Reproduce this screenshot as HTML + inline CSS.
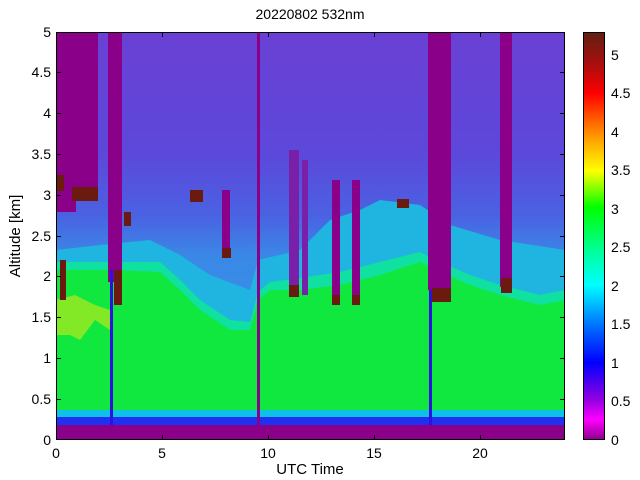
<!DOCTYPE html>
<html><head><meta charset="utf-8"><style>
html,body{margin:0;padding:0;background:#fff;width:640px;height:480px;overflow:hidden}
svg{display:block;font-family:"Liberation Sans",sans-serif}
</style></head><body>
<svg width="640" height="480" viewBox="0 0 640 480">
<defs>
<linearGradient id="sky" x1="0" y1="0" x2="0" y2="1">
<stop offset="0" stop-color="#6a40d4"/>
<stop offset="0.3" stop-color="#5c48da"/>
<stop offset="0.45" stop-color="#4a62e2"/>
<stop offset="0.55" stop-color="#3a88e6"/>
<stop offset="1" stop-color="#30a0e8"/>
</linearGradient>
<linearGradient id="cb" x1="0" y1="1" x2="0" y2="0">
<stop offset="0" stop-color="#8b008b"/>
<stop offset="0.05" stop-color="#ff00ff"/>
<stop offset="0.1" stop-color="#9000e0"/>
<stop offset="0.19" stop-color="#0000ff"/>
<stop offset="0.28" stop-color="#0070ff"/>
<stop offset="0.38" stop-color="#00ffff"/>
<stop offset="0.47" stop-color="#00ff90"/>
<stop offset="0.57" stop-color="#00ff00"/>
<stop offset="0.66" stop-color="#ffff00"/>
<stop offset="0.75" stop-color="#ff9000"/>
<stop offset="0.85" stop-color="#ff0000"/>
<stop offset="0.93" stop-color="#a01010"/>
<stop offset="1" stop-color="#602010"/>
</linearGradient>
<clipPath id="c"><rect x="56" y="32" width="509" height="408"/></clipPath>
</defs>
<g clip-path="url(#c)">
<rect x="56" y="32" width="509" height="408" fill="url(#sky)"/>
<polygon fill="#20b4e0" points="56,250 100,245 150,240 180,255 210,275 250,290 258,260 300,250 330,220 360,210 380,200 420,205 450,225 500,240 565,250 565,415 56,415"/>
<polygon fill="#10e0a0" points="56,262 110,262 160,262 180,280 200,300 230,320 250,322 258,292 270,282 300,278 340,272 380,262 420,252 440,262 470,275 500,285 540,295 565,290 565,415 56,415"/>
<polygon fill="#10e840" points="56,270 110,270 160,272 180,290 200,310 230,330 250,330 258,300 270,290 300,290 340,285 380,275 420,262 440,272 470,285 500,295 540,305 565,300 565,415 56,415"/>
<polygon fill="#a0e820" opacity="0.8" points="56,300 75,295 95,305 110,310 110,330 95,320 80,340 70,335 56,335"/>
<rect x="56" y="410" width="509" height="7" fill="#10c0e8"/>
<rect x="56" y="417" width="509" height="8" fill="#2030f0"/>
<rect x="56" y="425" width="509" height="15" fill="#8a0088"/>
<rect x="56" y="32" width="42" height="155" fill="#8a0088"/>
<rect x="56" y="32" width="20" height="180" fill="#8a0088"/>
<rect x="108" y="32" width="14" height="250" fill="#8a0088"/>
<rect x="110" y="270" width="3" height="155" fill="#3010e0"/>
<rect x="257" y="32" width="3" height="393" fill="#8a0088"/>
<rect x="289" y="150" width="10" height="145" fill="#7a20a8"/>
<rect x="302" y="160" width="6" height="135" fill="#7a20a8"/>
<rect x="332" y="180" width="8" height="125" fill="#8a0088"/>
<rect x="352" y="180" width="8" height="125" fill="#8a0088"/>
<rect x="428" y="32" width="23" height="258" fill="#8a0088"/>
<rect x="429" y="290" width="3" height="135" fill="#3010e0"/>
<rect x="500" y="32" width="12" height="255" fill="#8a0088"/>
<rect x="222" y="190" width="8" height="60" fill="#8a0088"/>
<rect x="56" y="175" width="8" height="16" fill="#6b1a10"/>
<rect x="72" y="187" width="26" height="14" fill="#6b1a10"/>
<rect x="124" y="212" width="7" height="14" fill="#6b1a10"/>
<rect x="190" y="190" width="13" height="12" fill="#6b1a10"/>
<rect x="222" y="248" width="9" height="10" fill="#6b1a10"/>
<rect x="397" y="199" width="12" height="9" fill="#6b1a10"/>
<rect x="432" y="288" width="19" height="14" fill="#6b1a10"/>
<rect x="501" y="278" width="11" height="15" fill="#6b1a10"/>
<rect x="332" y="295" width="8" height="10" fill="#6b1a10"/>
<rect x="352" y="295" width="8" height="10" fill="#6b1a10"/>
<rect x="289" y="285" width="10" height="12" fill="#6b1a10"/>
<rect x="60" y="260" width="6" height="40" fill="#6b1a10"/>
<rect x="114" y="270" width="8" height="35" fill="#6b1a10"/>
</g>
<rect x="56.5" y="32.5" width="508" height="407" fill="none" stroke="#000" stroke-width="1"/>
<g stroke="#000" stroke-width="1">
<path d="M56.5 440v-5M162.5 440v-5M268.5 440v-5M374.5 440v-5M480.5 440v-5M162.5 32v5M268.5 32v5M374.5 32v5M480.5 32v5"/>
<path d="M56 399.5h5M56 358.5h5M56 317.5h5M56 276.5h5M56 236.5h5M56 195.5h5M56 154.5h5M56 113.5h5M56 72.5h5M565 399.5h-5M565 358.5h-5M565 317.5h-5M565 276.5h-5M565 236.5h-5M565 195.5h-5M565 154.5h-5M565 113.5h-5M565 72.5h-5"/>
</g>
<rect x="583" y="32" width="22" height="408" fill="url(#cb)"/>
<rect x="583.5" y="32.5" width="21" height="407" fill="none" stroke="#000"/>
<g font-size="14" fill="#000">
<text x="310" y="19" text-anchor="middle" font-size="14">20220802 532nm</text>
<text x="310" y="474" text-anchor="middle" font-size="15">UTC Time</text>
<text transform="translate(20,236) rotate(-90)" text-anchor="middle" font-size="15">Altitude [km]</text>
<g text-anchor="middle">
<text x="56" y="458">0</text><text x="162" y="458">5</text><text x="268" y="458">10</text><text x="374" y="458">15</text><text x="480" y="458">20</text>
</g>
<g text-anchor="end">
<text x="51" y="445">0</text><text x="51" y="404">0.5</text><text x="51" y="363">1</text><text x="51" y="322">1.5</text><text x="51" y="281">2</text><text x="51" y="241">2.5</text><text x="51" y="200">3</text><text x="51" y="159">3.5</text><text x="51" y="118">4</text><text x="51" y="77">4.5</text><text x="51" y="37">5</text>
</g>
<g>
<text x="611" y="445">0</text><text x="611" y="406">0.5</text><text x="611" y="368">1</text><text x="611" y="329">1.5</text><text x="611" y="291">2</text><text x="611" y="252">2.5</text><text x="611" y="214">3</text><text x="611" y="175">3.5</text><text x="611" y="137">4</text><text x="611" y="98">4.5</text><text x="611" y="60">5</text>
</g>
</g>
</svg>
</body></html>
